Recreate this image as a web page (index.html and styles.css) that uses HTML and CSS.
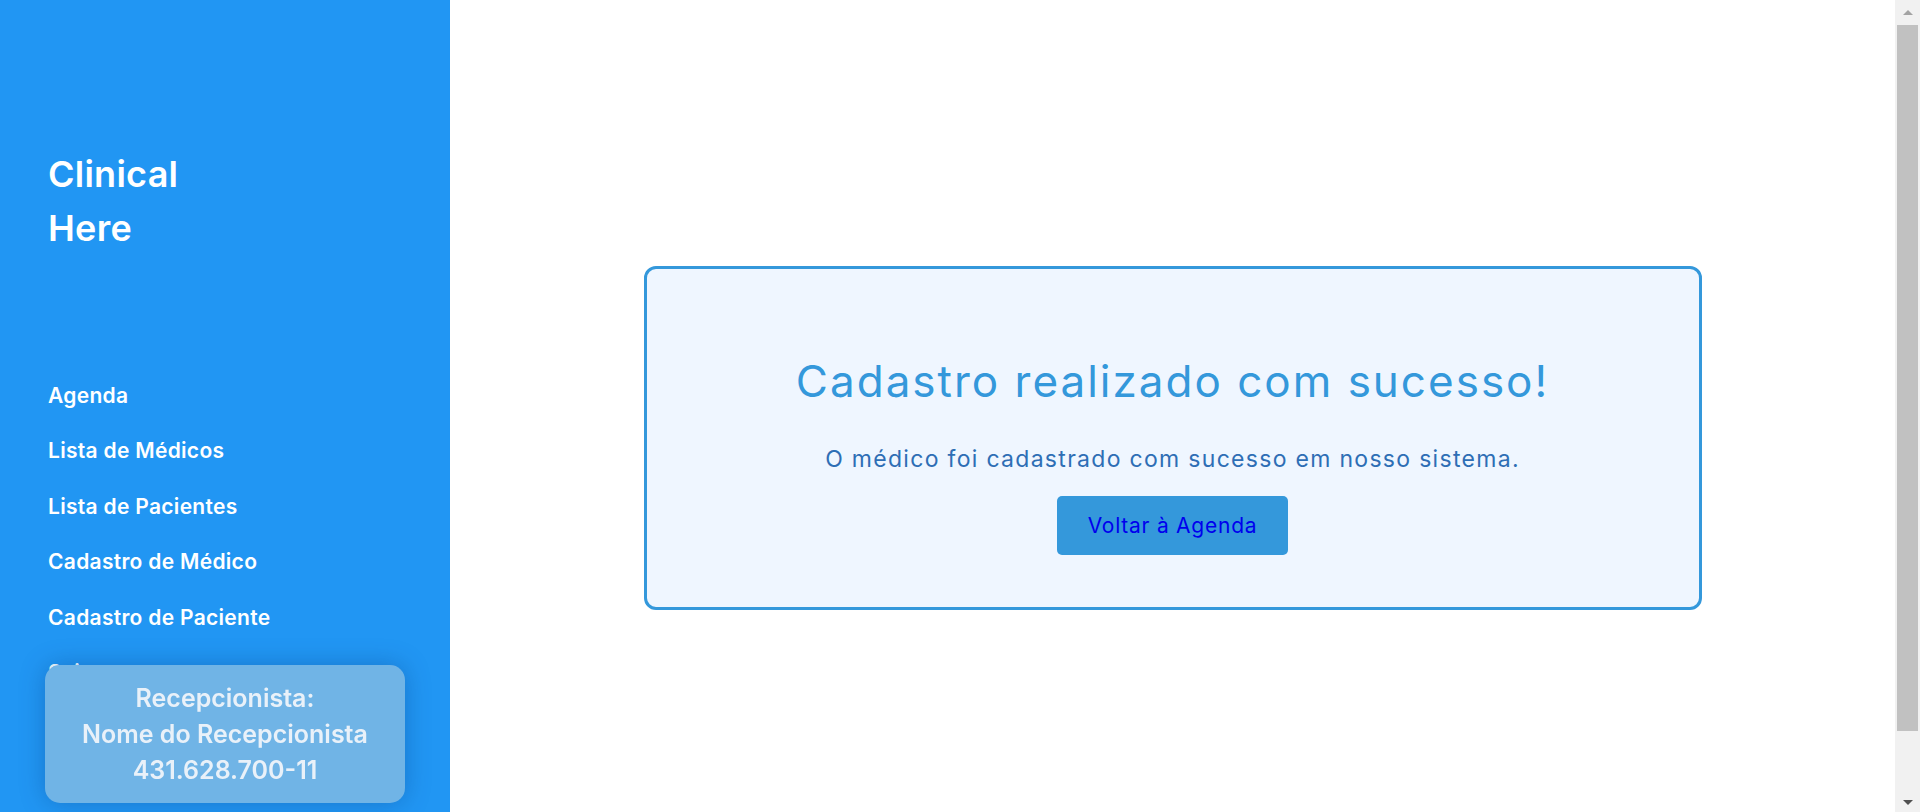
FILE: index.html
```html
<!DOCTYPE html>
<html lang="pt-BR">
<head>
<meta charset="utf-8">
<title>Clinical Here</title>
<link rel="stylesheet" href="styles.css">
</head>
<body>
<aside class="sidebar">
  <div class="brand">Clinical<br>Here</div>
  <nav class="nav">
    <a class="nav-item" href="#">Agenda</a>
    <a class="nav-item" href="#">Lista de Médicos</a>
    <a class="nav-item" href="#">Lista de Pacientes</a>
    <a class="nav-item" href="#">Cadastro de Médico</a>
    <a class="nav-item" href="#">Cadastro de Paciente</a>
    <a class="nav-item" href="#">Sair</a>
  </nav>
  <div class="user-box">
    <div>Recepcionista:</div>
    <div>Nome do Recepcionista</div>
    <div>431.628.700-11</div>
  </div>
</aside>
<main class="main">
  <section class="card">
    <h1 class="card-title">Cadastro realizado com sucesso!</h1>
    <p class="card-text">O médico foi cadastrado com sucesso em nosso sistema.</p>
    <button class="btn" type="button"><a class="btn-link" href="#">Voltar à Agenda</a></button>
  </section>
</main>
<div class="scrollbar" aria-hidden="true">
  <div class="sb-btn"><span class="sb-up"></span></div>
  <div class="sb-thumb"></div>
  <div class="sb-space"></div>
  <div class="sb-btn sb-btn-down"><span class="sb-down"></span></div>
</div>
</body>
</html>
```

FILE: styles.css
```css
html, body {
  margin: 0;
  padding: 0;
}
body {
  display: flex;
  height: 100vh;
  overflow: hidden;
  font-family: "Inter", "Liberation Sans", sans-serif;
  background: #ffffff;
}
.sidebar {
  flex: 0 0 450px;
  width: 450px;
  height: 100vh;
  background: #2196f3;
  color: #ffffff;
  padding-left: 48px;
  box-sizing: border-box;
}
.brand {
  font-size: 36px;
  font-weight: 600;
  line-height: 54px;
  letter-spacing: 0.25px;
  padding-top: 147px;
}
.nav {
  display: flex;
  flex-direction: column;
  margin-top: 113px;
}
.nav-item {
  color: #ffffff;
  text-decoration: none;
  font-size: 21px;
  font-weight: 600;
  line-height: 30px;
  padding: 12.75px 0;
  letter-spacing: 0.3px;
}
.user-box {
  position: fixed;
  left: 45px;
  bottom: 9px;
  width: 360px;
  box-sizing: border-box;
  padding: 15px 0;
  background: #70b4e6;
  border-radius: 15px;
  box-shadow: 0 0 24px rgba(10, 60, 130, 0.35);
  color: #e9f1f9;
  text-align: center;
  font-size: 25px;
  font-weight: 600;
  line-height: 36px;
}
.main {
  flex: 1;
  display: flex;
  justify-content: center;
  align-items: flex-start;
  padding: 266px 25px 0 0;
  box-sizing: border-box;
}
.card {
  width: 1058px;
  box-sizing: border-box;
  border: 3px solid #3498db;
  border-radius: 12px;
  background: #eff6ff;
  text-align: center;
  padding: 85px 20px 52px;
  display: flex;
  flex-direction: column;
  align-items: center;
}
.card-title {
  margin: 0;
  font-size: 44px;
  font-weight: 400;
  line-height: 54px;
  letter-spacing: 2px;
  color: #3498db;
}
.card-text {
  margin: 36px 0 22px;
  font-size: 23px;
  line-height: 30px;
  letter-spacing: 1.3px;
  color: #2e6eb5;
}
.btn {
  width: 231px;
  height: 59px;
  border: none;
  border-radius: 5px;
  background: #3498db;
  font-family: inherit;
  cursor: pointer;
}
.btn-link {
  color: #0000ee;
  text-decoration: none;
  font-size: 21px;
  letter-spacing: 0.75px;
}
.scrollbar {
  position: fixed;
  top: 0;
  right: 0;
  width: 25px;
  height: 100vh;
  background: #f1f1f1;
  display: flex;
  flex-direction: column;
}
.sb-btn {
  height: 25px;
  display: flex;
  align-items: center;
  justify-content: center;
}
.sb-btn-down {
  height: 20px;
}
.sb-up {
  width: 0;
  height: 0;
  border-left: 5px solid transparent;
  border-right: 5px solid transparent;
  border-bottom: 5px solid #a3a3a3;
}
.sb-down {
  width: 0;
  height: 0;
  border-left: 5px solid transparent;
  border-right: 5px solid transparent;
  border-top: 5px solid #505050;
}
.sb-thumb {
  height: 706px;
  margin: 0 2px;
  background: #c1c1c1;
}
.sb-space {
  flex: 1;
}
```
